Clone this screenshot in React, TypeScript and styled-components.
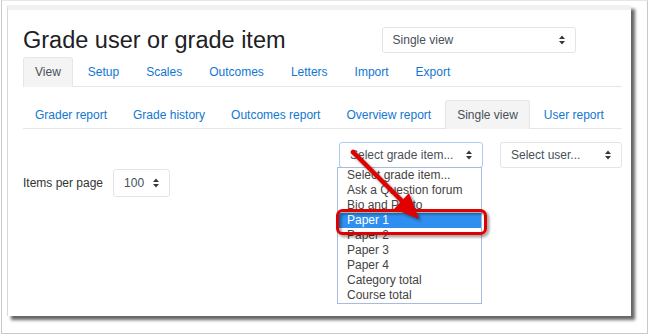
import styled, { createGlobalStyle } from 'styled-components'

const GlobalStyle = createGlobalStyle`
  body {
    margin: 0;
    background: #ffffff;
    font-family: "Liberation Sans", Arial, sans-serif;
  }
`

const topTabs = ['View', 'Setup', 'Scales', 'Outcomes', 'Letters', 'Import', 'Export']
const reportTabs = ['Grader report', 'Grade history', 'Outcomes report', 'Overview report', 'Single view', 'User report']
const gradeItems = [
  'Select grade item...',
  'Ask a Question forum',
  'Bio and Photo',
  'Paper 1',
  'Paper 2',
  'Paper 3',
  'Paper 4',
  'Category total',
  'Course total'
]

function Caret() {
  return (
    <svg width="6" height="10" viewBox="0 0 6 10">
      <path d="M0 4 L3 0.5 L6 4 Z M0 6 L3 9.5 L6 6 Z" fill="#343a40" />
    </svg>
  )
}

export default function App() {
  return (
    <>
      <GlobalStyle />
      <Frame>
        <Card>
          <Header>
            <Title>Grade user or grade item</Title>
            <Select $width={194}>
              <span>Single view</span>
              <Caret />
            </Select>
          </Header>

          <TabList $gap={3}>
            {topTabs.map((t) => (
              <Tab key={t} $active={t === 'View'} $height={30}>{t}</Tab>
            ))}
          </TabList>

          <TabList $gap={2} $top={13}>
            {reportTabs.map((t) => (
              <Tab key={t} $active={t === 'Single view'} $height={29}>{t}</Tab>
            ))}
          </TabList>

          <SelectRow>
            <SelectWrap>
              <Select $width={144} $focused>
                <span>Select grade item...</span>
                <Caret />
              </Select>
              <OptionList>
                {gradeItems.map((item) => (
                  <Option key={item} $selected={item === 'Paper 1'}>{item}</Option>
                ))}
              </OptionList>
            </SelectWrap>
            <Select $width={122}>
              <span>Select user...</span>
              <Caret />
            </Select>
          </SelectRow>

          <PerPageRow>
            <Label>Items per page</Label>
            <Select $width={57} $height={28}>
              <span>100</span>
              <Caret />
            </Select>
          </PerPageRow>
        </Card>

        <Annotation width="650" height="336" viewBox="0 0 650 336">
          <rect x="335.5" y="209.5" width="148" height="23" rx="5" fill="none" stroke="#e10000" strokeWidth="3" />
          <line x1="351" y1="151" x2="403" y2="203" stroke="#e10000" strokeWidth="4.5" strokeLinecap="round" />
          <polygon points="417,218 392,208 407,192" fill="#e10000" />
        </Annotation>
      </Frame>
    </>
  )
}

const Frame = styled.div`
  position: relative;
  box-sizing: border-box;
  width: 647px;
  height: 334px;
  margin: 0 0 0 1px;
  padding: 4px 15px 18px 5px;
  border: 1px solid #c9c9c9;
  border-top-color: #e6e6e6;
  background: #ffffff;
`

const Card = styled.div`
  box-sizing: border-box;
  width: 624px;
  height: 311px;
  padding: 0 9px 0 15px;
  border-top: 5px solid #f1f1f1;
  border-left: 1px solid #d9d9d9;
  background: #ffffff;
  box-shadow: 4px 4px 3px rgba(0, 0, 0, 0.6);
`

const Header = styled.div`
  display: flex;
  align-items: center;
  gap: 96px;
  margin-top: 16px;
  height: 28px;
`

const Title = styled.h2`
  margin: 0;
  font-size: 23.5px;
  font-weight: 400;
  line-height: 28px;
  color: #1d2125;
`

const Select = styled.div<{ $width: number; $height?: number; $focused?: boolean }>`
  box-sizing: border-box;
  display: flex;
  align-items: center;
  justify-content: space-between;
  flex-shrink: 0;
  width: ${(p) => p.$width}px;
  height: ${(p) => p.$height ?? 26}px;
  padding: 0 10px 0 10px;
  border: 1px solid ${(p) => (p.$focused ? '#a9cdf3' : '#e2e4e7')};
  border-radius: 3px;
  background: #ffffff;
  font-size: 12px;
  white-space: nowrap;
  color: #495057;
`

const TabList = styled.div<{ $gap: number; $top?: number }>`
  display: flex;
  gap: ${(p) => p.$gap}px;
  margin-top: ${(p) => p.$top ?? 3}px;
  border-bottom: 1px solid #e4e6e9;
`

const Tab = styled.div<{ $active?: boolean; $height: number }>`
  box-sizing: border-box;
  flex-shrink: 0;
  height: ${(p) => p.$height}px;
  line-height: ${(p) => p.$height - 1}px;
  padding: 0 11px;
  margin-bottom: -1px;
  font-size: 12px;
  white-space: nowrap;
  color: ${(p) => (p.$active ? '#495057' : '#1177d1')};
  background: ${(p) => (p.$active ? '#f4f4f4' : 'transparent')};
  border: 1px solid ${(p) => (p.$active ? '#e6e6e6' : 'transparent')};
  border-bottom: 0;
  border-radius: 3px 3px 0 0;
`

const SelectRow = styled.div`
  display: flex;
  justify-content: flex-end;
  gap: 17px;
  margin-top: 13px;
`

const SelectWrap = styled.div`
  position: relative;
`

const OptionList = styled.div`
  position: absolute;
  top: 25px;
  left: -2px;
  width: 145px;
  box-sizing: border-box;
  border: 1px solid #a7bbdc;
  background: #ffffff;
  z-index: 2;
`

const Option = styled.div<{ $selected?: boolean }>`
  height: 15px;
  line-height: 15px;
  padding-left: 9px;
  font-size: 12px;
  white-space: nowrap;
  color: ${(p) => (p.$selected ? '#ffffff' : '#444444')};
  background: ${(p) => (p.$selected ? '#2f8ff0' : 'transparent')};
`

const PerPageRow = styled.div`
  display: flex;
  align-items: center;
  gap: 10px;
  margin-top: 1px;
`

const Label = styled.span`
  font-size: 12px;
  color: #333333;
`

const Annotation = styled.svg`
  position: absolute;
  top: 0;
  left: 0;
  pointer-events: none;
  z-index: 5;
  filter: drop-shadow(2px 2px 1.5px rgba(0, 0, 0, 0.45));
`
